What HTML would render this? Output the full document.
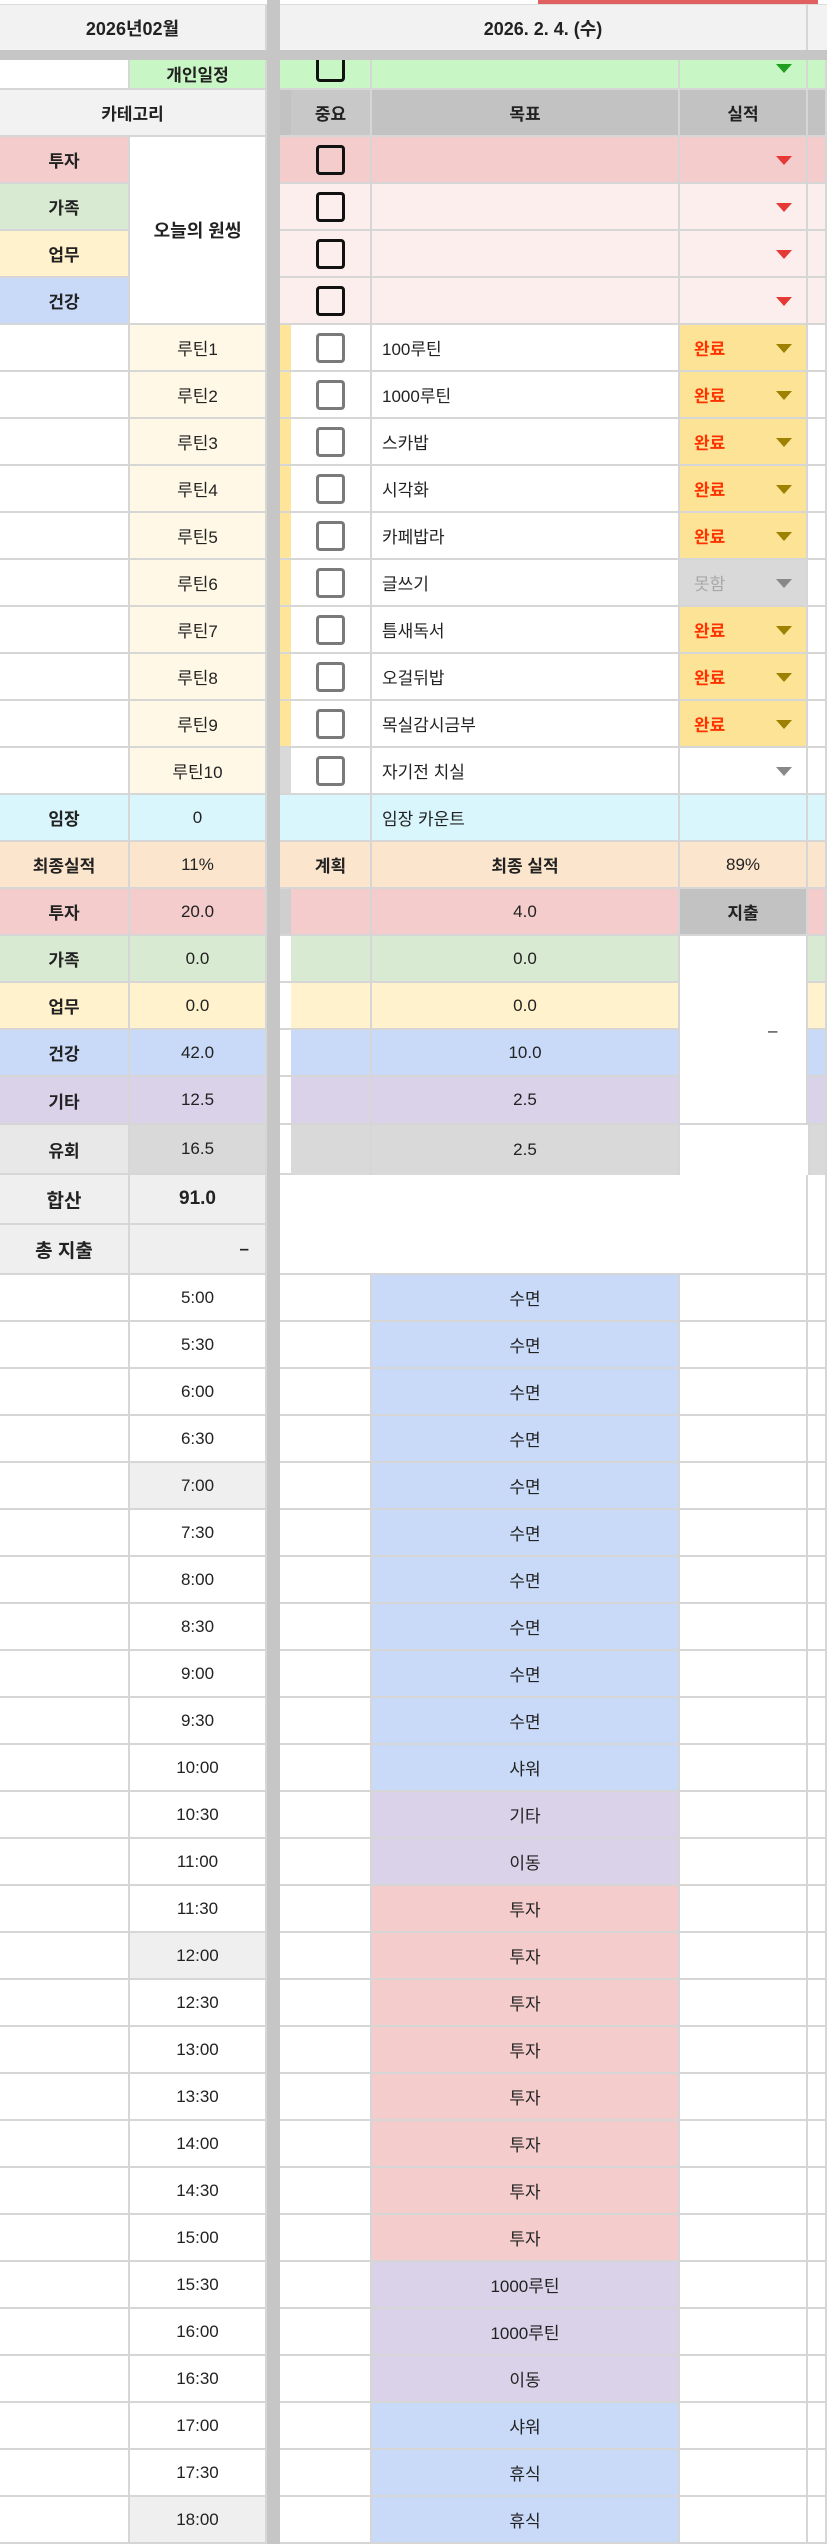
<!DOCTYPE html>
<html><head><meta charset="utf-8"><style>
*{margin:0;padding:0;box-sizing:border-box}
body{width:827px;height:2512px;overflow:hidden;background:#fff;font-family:"Liberation Sans","Noto Sans CJK KR",sans-serif;font-size:17px;color:#222;position:relative}
.r{display:grid;grid-template-columns:130px 137px 13px 11px 81px 308px 128px 19px;height:47px}
.r>div{border-right:2px solid #d6d6d6;border-bottom:2px solid #d6d6d6;display:flex;align-items:center;justify-content:center;position:relative;white-space:nowrap;overflow:hidden}
.r>div.s{background:#c6c6c6;border:none}
.r>div.c{border-right:none}
.b{font-weight:bold}
.l{justify-content:flex-start!important;padding-left:10px}
.red{background:#f4cccc}.pk{background:#fdeeee}.gr{background:#d9ead3}.ye{background:#fff2cc}.bl{background:#c9daf8}.pu{background:#d9d2e9}.gy{background:#d9d9d9}.cy{background:#d9f6fc}.or{background:#fce5cd}.lg{background:#efefef}.hd{background:#c2c2c2}.cr{background:#fff8e6}.ys{background:#ffe599}.gn{background:#c8f7c5}
.cb{width:29px;height:30px;border:3px solid #111;border-radius:4px;background:transparent}
.cg{width:29px;height:30px;border:3px solid #7a7a7a;border-radius:4px;background:#fff}
.tri{position:absolute;right:14px;top:50%;margin-top:-4px;width:0;height:0;border-left:8px solid transparent;border-right:8px solid transparent;border-top:9px solid #e53935}
.tri.o{border-top-color:#9c8200}.tri.g{border-top-color:#888}.tri.gg{border-top-color:#1f9e1f}
.ok{background:#fde396;justify-content:flex-start!important;padding-left:14px;color:#ff3300;font-weight:bold}
.no{background:#d9d9d9;justify-content:flex-start!important;padding-left:14px;color:#a8a8a8}
.nb{border-bottom:none!important}
</style></head><body>
<div style="position:absolute;left:0;top:0;width:827px;height:5px;background:#fff;border-bottom:1px solid #ddd"></div>
<div style="position:absolute;left:538px;top:0;width:280px;height:4px;background:#e06060"></div>
<div style="position:absolute;left:267px;top:0;width:13px;height:60px;background:#c6c6c6"></div>
<div style="position:absolute;left:0;top:5px;width:267px;height:45px;background:#f2f2f2;display:flex;align-items:center;justify-content:center;font-weight:bold;font-size:18px;border-right:2px solid #d6d6d6">2026년02월</div>
<div style="position:absolute;left:280px;top:5px;width:528px;height:45px;background:#f2f2f2;display:flex;align-items:center;justify-content:center;font-weight:bold;font-size:18px;border-right:2px solid #d6d6d6">2026. 2. 4. (수)</div>
<div style="position:absolute;left:808px;top:5px;width:19px;height:45px;background:#f2f2f2"></div>
<div style="position:absolute;left:0;top:50px;width:827px;height:10px;background:#c6c6c6"></div>
<div style="position:absolute;top:60px;left:0;width:827px">
<div class="r" style="height:30px"><div></div><div class="gn b" style="align-items:flex-end;padding-bottom:2px">개인일정</div><div class="s"></div><div class="gn c"></div><div class="gn" style="align-items:flex-start"><div class="cb" style="margin-top:-8px"></div></div><div class="gn"></div><div class="gn"><span class="tri gg" style="top:4px;margin-top:0"></span></div><div class="gn"></div></div>
<div class="r"><div style="background:#f2f2f2;border-right:none"></div><div style="background:#f2f2f2"></div><div class="s"></div><div class="hd c"></div><div class="hd b" style="background:#c8c8c8">중요</div><div class="hd b">목표</div><div class="hd b">실적</div><div class="hd"></div></div>
<div class="r"><div class="red b">투자</div><div class="nb"></div><div class="s"></div><div class="red c"></div><div class="red"><div class="cb"></div></div><div class="red"></div><div class="red"><span class="tri"></span></div><div class="red"></div></div>
<div class="r"><div class="gr b">가족</div><div class="nb"></div><div class="s"></div><div class="pk c"></div><div class="pk"><div class="cb"></div></div><div class="pk"></div><div class="pk"><span class="tri"></span></div><div class="pk"></div></div>
<div class="r"><div class="ye b">업무</div><div class="nb"></div><div class="s"></div><div class="pk c"></div><div class="pk"><div class="cb"></div></div><div class="pk"></div><div class="pk"><span class="tri"></span></div><div class="pk"></div></div>
<div class="r"><div class="bl b">건강</div><div></div><div class="s"></div><div class="pk c"></div><div class="pk"><div class="cb"></div></div><div class="pk"></div><div class="pk"><span class="tri"></span></div><div class="pk"></div></div>
<div class="r"><div></div><div class="cr">루틴1</div><div class="s"></div><div class="ys c"></div><div><div class="cg"></div></div><div class="l">100루틴</div><div class="ok">완료<span class="tri o"></span></div><div></div></div>
<div class="r"><div></div><div class="cr">루틴2</div><div class="s"></div><div class="ys c"></div><div><div class="cg"></div></div><div class="l">1000루틴</div><div class="ok">완료<span class="tri o"></span></div><div></div></div>
<div class="r"><div></div><div class="cr">루틴3</div><div class="s"></div><div class="ys c"></div><div><div class="cg"></div></div><div class="l">스카밥</div><div class="ok">완료<span class="tri o"></span></div><div></div></div>
<div class="r"><div></div><div class="cr">루틴4</div><div class="s"></div><div class="ys c"></div><div><div class="cg"></div></div><div class="l">시각화</div><div class="ok">완료<span class="tri o"></span></div><div></div></div>
<div class="r"><div></div><div class="cr">루틴5</div><div class="s"></div><div class="ys c"></div><div><div class="cg"></div></div><div class="l">카페밥라</div><div class="ok">완료<span class="tri o"></span></div><div></div></div>
<div class="r"><div></div><div class="cr">루틴6</div><div class="s"></div><div class="ys c"></div><div><div class="cg"></div></div><div class="l">글쓰기</div><div class="no">못함<span class="tri g"></span></div><div></div></div>
<div class="r"><div></div><div class="cr">루틴7</div><div class="s"></div><div class="ys c"></div><div><div class="cg"></div></div><div class="l">틈새독서</div><div class="ok">완료<span class="tri o"></span></div><div></div></div>
<div class="r"><div></div><div class="cr">루틴8</div><div class="s"></div><div class="ys c"></div><div><div class="cg"></div></div><div class="l">오걸뒤밥</div><div class="ok">완료<span class="tri o"></span></div><div></div></div>
<div class="r"><div></div><div class="cr">루틴9</div><div class="s"></div><div class="ys c"></div><div><div class="cg"></div></div><div class="l">목실감시금부</div><div class="ok">완료<span class="tri o"></span></div><div></div></div>
<div class="r"><div></div><div class="cr">루틴10</div><div class="s"></div><div class="gy c"></div><div><div class="cg"></div></div><div class="l">자기전 치실</div><div><span class="tri g"></span></div><div></div></div>
<div class="r"><div class="cy b">임장</div><div class="cy">0</div><div class="s"></div><div class="cy c"></div><div class="cy"></div><div class="cy l">임장 카운트</div><div class="cy"></div><div class="cy"></div></div>
<div class="r"><div class="or b">최종실적</div><div class="or">11%</div><div class="s"></div><div class="or c"></div><div class="or b">계획</div><div class="or b">최종 실적</div><div class="or">89%</div><div class="or"></div></div>
<div class="r"><div class="red b">투자</div><div class="red">20.0</div><div class="s"></div><div class="hd c" style="background:#cfcfcf"></div><div class="red"></div><div class="red">4.0</div><div class="hd b">지출</div><div class="red"></div></div>
<div class="r"><div class="gr b">가족</div><div class="gr">0.0</div><div class="s"></div><div class="c"></div><div class="gr"></div><div class="gr">0.0</div><div class="nb"></div><div class="gr"></div></div>
<div class="r"><div class="ye b">업무</div><div class="ye">0.0</div><div class="s"></div><div class="c"></div><div class="ye"></div><div class="ye">0.0</div><div class="nb" style="overflow:visible;z-index:2"><span style="position:absolute;left:88px;top:38px">–</span></div><div class="ye"></div></div>
<div class="r"><div class="bl b">건강</div><div class="bl">42.0</div><div class="s"></div><div class="c"></div><div class="bl"></div><div class="bl">10.0</div><div class="nb"></div><div class="bl"></div></div>
<div class="r" style="height:48px"><div class="pu b">기타</div><div class="pu">12.5</div><div class="s"></div><div class="c"></div><div class="pu"></div><div class="pu">2.5</div><div></div><div class="pu"></div></div>
<div class="r" style="height:50px"><div class="gy b" style="background:#e8e8e8">유회</div><div class="gy">16.5</div><div class="s"></div><div class="c"></div><div class="gy" style="border-bottom:none"></div><div class="gy" style="border-bottom:none">2.5</div><div style="border-bottom:none;border-right:none"></div><div class="gy" style="border-bottom:none;border-left:2px solid #d6d6d6"></div></div>
<div class="r" style="height:50px"><div class="lg b" style="font-size:19px">합산</div><div class="lg b" style="font-size:19px">91.0</div><div class="s"></div><div class="c" style="border-bottom:none"></div><div style="border:none"></div><div style="border:none"></div><div style="border-bottom:none"></div><div style="border-bottom:none"></div></div>
<div class="r" style="height:50px"><div class="lg b" style="font-size:19px">총 지출</div><div class="lg b" style="justify-content:flex-end;padding-right:16px">–</div><div class="s"></div><div class="c"></div><div style="border-right:none"></div><div style="border-right:none"></div><div></div><div></div></div>
<div class="r"><div></div><div>5:00</div><div class="s"></div><div class="c"></div><div></div><div class="bl">수면</div><div></div><div></div></div>
<div class="r"><div></div><div>5:30</div><div class="s"></div><div class="c"></div><div></div><div class="bl">수면</div><div></div><div></div></div>
<div class="r"><div></div><div>6:00</div><div class="s"></div><div class="c"></div><div></div><div class="bl">수면</div><div></div><div></div></div>
<div class="r"><div></div><div>6:30</div><div class="s"></div><div class="c"></div><div></div><div class="bl">수면</div><div></div><div></div></div>
<div class="r"><div></div><div class="lg">7:00</div><div class="s"></div><div class="c"></div><div></div><div class="bl">수면</div><div></div><div></div></div>
<div class="r"><div></div><div>7:30</div><div class="s"></div><div class="c"></div><div></div><div class="bl">수면</div><div></div><div></div></div>
<div class="r"><div></div><div>8:00</div><div class="s"></div><div class="c"></div><div></div><div class="bl">수면</div><div></div><div></div></div>
<div class="r"><div></div><div>8:30</div><div class="s"></div><div class="c"></div><div></div><div class="bl">수면</div><div></div><div></div></div>
<div class="r"><div></div><div>9:00</div><div class="s"></div><div class="c"></div><div></div><div class="bl">수면</div><div></div><div></div></div>
<div class="r"><div></div><div>9:30</div><div class="s"></div><div class="c"></div><div></div><div class="bl">수면</div><div></div><div></div></div>
<div class="r"><div></div><div>10:00</div><div class="s"></div><div class="c"></div><div></div><div class="bl">샤워</div><div></div><div></div></div>
<div class="r"><div></div><div>10:30</div><div class="s"></div><div class="c"></div><div></div><div class="pu">기타</div><div></div><div></div></div>
<div class="r"><div></div><div>11:00</div><div class="s"></div><div class="c"></div><div></div><div class="pu">이동</div><div></div><div></div></div>
<div class="r"><div></div><div>11:30</div><div class="s"></div><div class="c"></div><div></div><div class="red">투자</div><div></div><div></div></div>
<div class="r"><div></div><div class="lg">12:00</div><div class="s"></div><div class="c"></div><div></div><div class="red">투자</div><div></div><div></div></div>
<div class="r"><div></div><div>12:30</div><div class="s"></div><div class="c"></div><div></div><div class="red">투자</div><div></div><div></div></div>
<div class="r"><div></div><div>13:00</div><div class="s"></div><div class="c"></div><div></div><div class="red">투자</div><div></div><div></div></div>
<div class="r"><div></div><div>13:30</div><div class="s"></div><div class="c"></div><div></div><div class="red">투자</div><div></div><div></div></div>
<div class="r"><div></div><div>14:00</div><div class="s"></div><div class="c"></div><div></div><div class="red">투자</div><div></div><div></div></div>
<div class="r"><div></div><div>14:30</div><div class="s"></div><div class="c"></div><div></div><div class="red">투자</div><div></div><div></div></div>
<div class="r"><div></div><div>15:00</div><div class="s"></div><div class="c"></div><div></div><div class="red">투자</div><div></div><div></div></div>
<div class="r"><div></div><div>15:30</div><div class="s"></div><div class="c"></div><div></div><div class="pu">1000루틴</div><div></div><div></div></div>
<div class="r"><div></div><div>16:00</div><div class="s"></div><div class="c"></div><div></div><div class="pu">1000루틴</div><div></div><div></div></div>
<div class="r"><div></div><div>16:30</div><div class="s"></div><div class="c"></div><div></div><div class="pu">이동</div><div></div><div></div></div>
<div class="r"><div></div><div>17:00</div><div class="s"></div><div class="c"></div><div></div><div class="bl">샤워</div><div></div><div></div></div>
<div class="r"><div></div><div>17:30</div><div class="s"></div><div class="c"></div><div></div><div class="bl">휴식</div><div></div><div></div></div>
<div class="r"><div></div><div class="lg">18:00</div><div class="s"></div><div class="c"></div><div></div><div class="bl">휴식</div><div></div><div></div></div>
</div>
<div style="position:absolute;left:0;top:90px;width:265px;height:45px;display:flex;align-items:center;justify-content:center;font-weight:bold;font-size:17px">카테고리</div>
<div style="position:absolute;left:130px;top:137px;width:135px;height:186px;background:#fff;display:flex;align-items:center;justify-content:center;font-weight:bold;font-size:18px">오늘의 원씽</div>
</body></html>
